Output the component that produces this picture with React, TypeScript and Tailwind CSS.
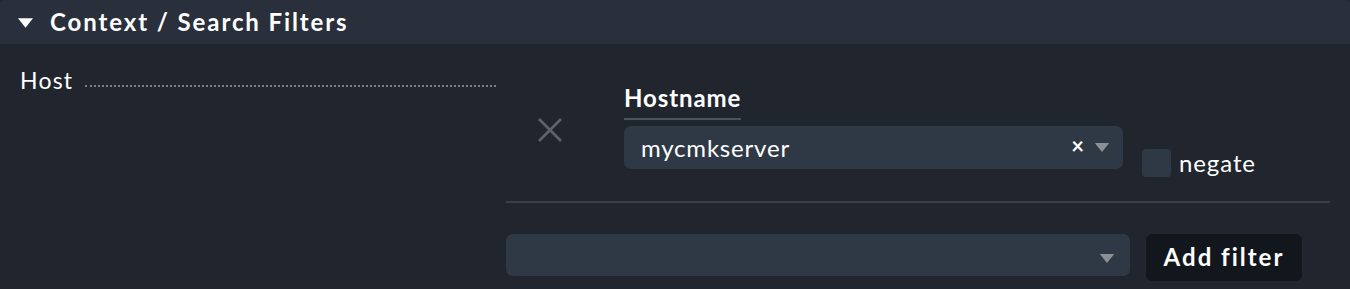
import React from "react";

const Tri = ({ className }: { className?: string }) => (
  <svg viewBox="0 0 16 10" className={className}>
    <polygon points="0,0 16,0 8,10" fill="currentColor" />
  </svg>
);

export default function App() {
  return (
    <div
      className="w-[1350px] h-[289px] bg-[#20252e] text-white overflow-hidden"
      style={{ fontFamily: "Lato, 'Noto Sans', sans-serif" }}
    >
      <div className="h-[44px] bg-[#29303b] rounded-t-[4px] flex items-center pl-[18px]">
        <Tri className="w-[15px] h-[12px] text-white mt-[2px]" />
        <span className="ml-[17px] text-[24px] font-bold tracking-[1.9px] leading-none">
          Context / Search Filters
        </span>
      </div>
      <div className="flex">
        <div className="w-[496px] pl-[20px] pt-[21px] flex items-start">
          <span className="text-[23px] leading-[30px] tracking-[1.2px]">Host</span>
          <div className="flex-1 ml-[12px] mt-[20px] border-b-2 border-dotted border-[#7a7f88]" />
        </div>
        <div className="flex-1 pl-[10px] pr-[20px]">
          <div className="flex h-[159px] border-b-2 border-[#3c3f44]">
            <div className="w-[118px] pl-[32px] pt-[74px]">
              <svg viewBox="0 0 24 24" className="w-[24px] h-[24px] text-[#5c636d]">
                <path d="M1 1 L23 23 M23 1 L1 23" stroke="currentColor" strokeWidth="2.6" />
              </svg>
            </div>
            <div className="pt-[39px]">
              <div className="inline-block text-[24px] font-bold tracking-[0.9px] leading-[30px] pb-[5px] border-b-2 border-[#4d535c]">
                Hostname
              </div>
              <div className="mt-[6px] w-[499px] h-[43px] bg-[#2f3945] rounded-[7px] flex items-center pl-[17px] pr-[13px]">
                <span className="text-[24px] tracking-[0.8px] flex-1">mycmkserver</span>
                <span className="text-[22px] font-bold leading-none mr-[10px] -mt-[4px]">×</span>
                <Tri className="w-[16px] h-[9px] text-[#8d8f93]" />
              </div>
            </div>
            <div className="flex items-start pl-[19px] pt-[105px]">
              <div className="w-[29px] h-[28px] bg-[#2f3945] rounded-[4px]" />
              <span className="ml-[8px] text-[24px] tracking-[0.9px] leading-[30px] -mt-[1px]">negate</span>
            </div>
          </div>
          <div className="flex items-start mt-[31px]">
            <div className="w-[624px] h-[42px] bg-[#2f3945] rounded-[7px] flex items-center justify-end pr-[15px]">
              <Tri className="w-[16px] h-[9px] text-[#8d8f93] mt-[6px]" />
            </div>
            <button className="ml-[16px] w-[156px] h-[47px] bg-[#12171e] rounded-[6px] text-[24px] font-bold tracking-[2px] pb-[2px]">
              Add filter
            </button>
          </div>
        </div>
      </div>
    </div>
  );
}
